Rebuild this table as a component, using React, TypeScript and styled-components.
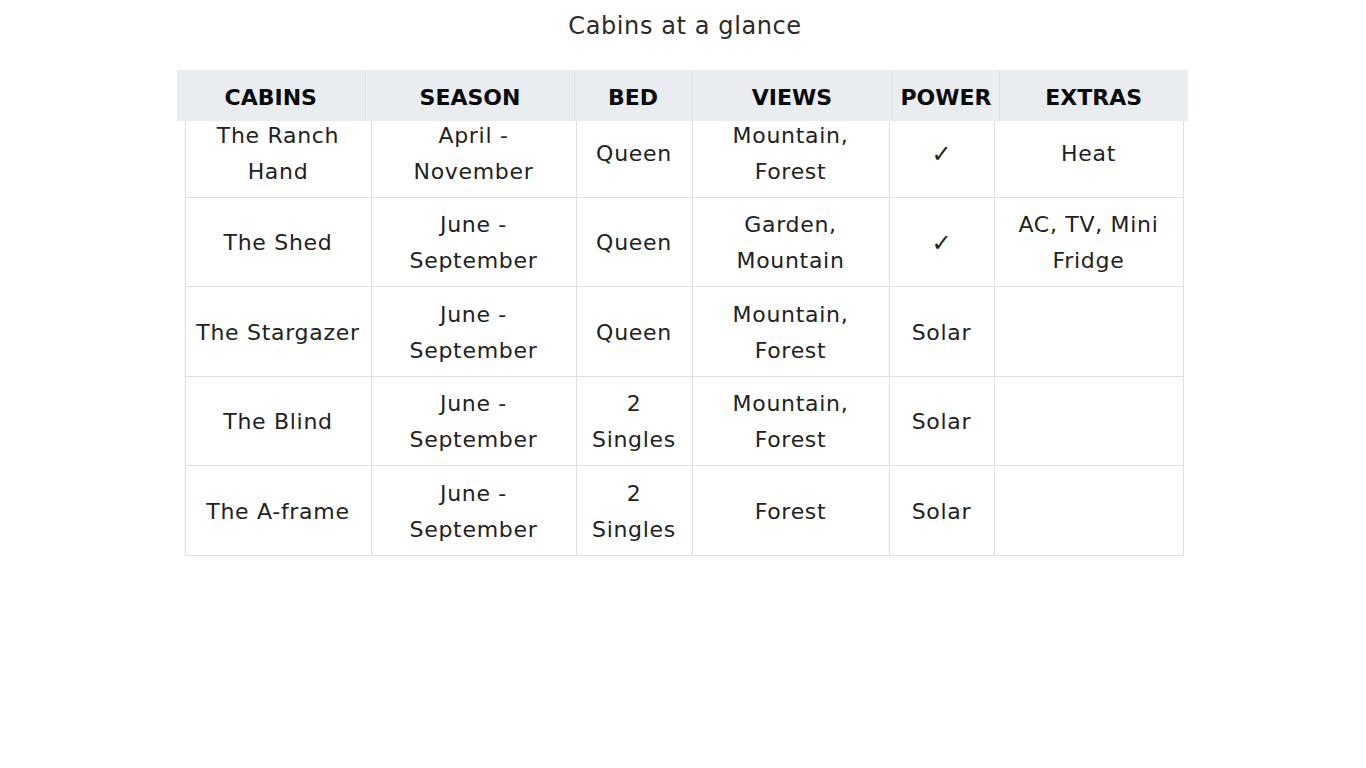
import React from 'react'
import styled, { createGlobalStyle } from 'styled-components'

const GlobalStyle = createGlobalStyle`
  html, body {
    margin: 0;
    padding: 0;
    background: #ffffff;
  }
  body {
    font-family: 'DejaVu Sans', 'Open Sans', sans-serif;
    color: #222;
  }
`

const headWidths = [189, 209, 117, 201, 107, 188]
const bodyWidths = [186, 205, 116, 197, 105, 189]

const columns = ['Cabins', 'Season', 'Bed', 'Views', 'Power', 'Extras']

const cabins = [
  ['The Ranch Hand', 'April - November', 'Queen', 'Mountain, Forest', '✓', 'Heat'],
  ['The Shed', 'June - September', 'Queen', 'Garden, Mountain', '✓', 'AC, TV, Mini Fridge'],
  ['The Stargazer', 'June - September', 'Queen', 'Mountain, Forest', 'Solar', ''],
  ['The Blind', 'June - September', '2 Singles', 'Mountain, Forest', 'Solar', ''],
  ['The A-frame', 'June - September', '2 Singles', 'Forest', 'Solar', ''],
]

export default function App() {
  return (
    <>
      <GlobalStyle />
      <Page>
        <Title>Cabins at a glance</Title>
        <TableWrap>
          <HeadTable>
            <colgroup>
              {headWidths.map((w, i) => (
                <col key={i} style={{ width: w }} />
              ))}
            </colgroup>
            <thead>
              <tr>
                {columns.map((c) => (
                  <HeadCell key={c}>{c}</HeadCell>
                ))}
              </tr>
            </thead>
          </HeadTable>
          <BodyTable>
            <colgroup>
              {bodyWidths.map((w, i) => (
                <col key={i} style={{ width: w }} />
              ))}
            </colgroup>
            <tbody>
              {cabins.map((row) => (
                <Row key={row[0]}>
                  {row.map((cell, i) => (
                    <Cell key={i} $mark={cell === '✓'}>
                      {cell}
                    </Cell>
                  ))}
                </Row>
              ))}
            </tbody>
          </BodyTable>
        </TableWrap>
      </Page>
    </>
  )
}

const Page = styled.div`
  width: 100%;
  min-height: 768px;
  display: flex;
  flex-direction: column;
  align-items: center;
`

const Title = styled.h1`
  margin: 8px 0 0;
  height: 62px;
  font-size: 24px;
  line-height: 36px;
  font-weight: 400;
  color: #2b2b2b;
  letter-spacing: 0.6px;
  padding-left: 4px;
`

const TableWrap = styled.div`
  width: 1011px;
  margin-left: -2px;
`

const HeadTable = styled.table`
  position: relative;
  z-index: 1;
  width: 1011px;
  table-layout: fixed;
  border-collapse: collapse;
  background: #e9edf0;
`

const HeadCell = styled.th`
  height: 47px;
  padding: 4px 2px 0;
  border-left: 1px solid #dde2e6;
  border-right: 1px solid #dde2e6;
  text-transform: uppercase;
  font-size: 22px;
  font-weight: 700;
  color: #0a0a0a;
  text-align: center;
  vertical-align: middle;

  &:first-child {
    border-left: none;
  }
  &:last-child {
    border-right: none;
  }
`

const BodyTable = styled.table`
  width: 998px;
  margin: -14px 0 0 8px;
  table-layout: fixed;
  border-collapse: collapse;
  background: #ffffff;
`

const Row = styled.tr`
  height: 89.5px;
`

const Cell = styled.td<{ $mark?: boolean }>`
  border: 1px solid #e0e0e0;
  padding: 3px 8px 0;
  text-align: center;
  vertical-align: middle;
  font-size: ${(p) => (p.$mark ? '24px' : '22px')};
  letter-spacing: ${(p) => (p.$mark ? '0' : '0.7px')};
  line-height: 36px;
  color: #222;
`
